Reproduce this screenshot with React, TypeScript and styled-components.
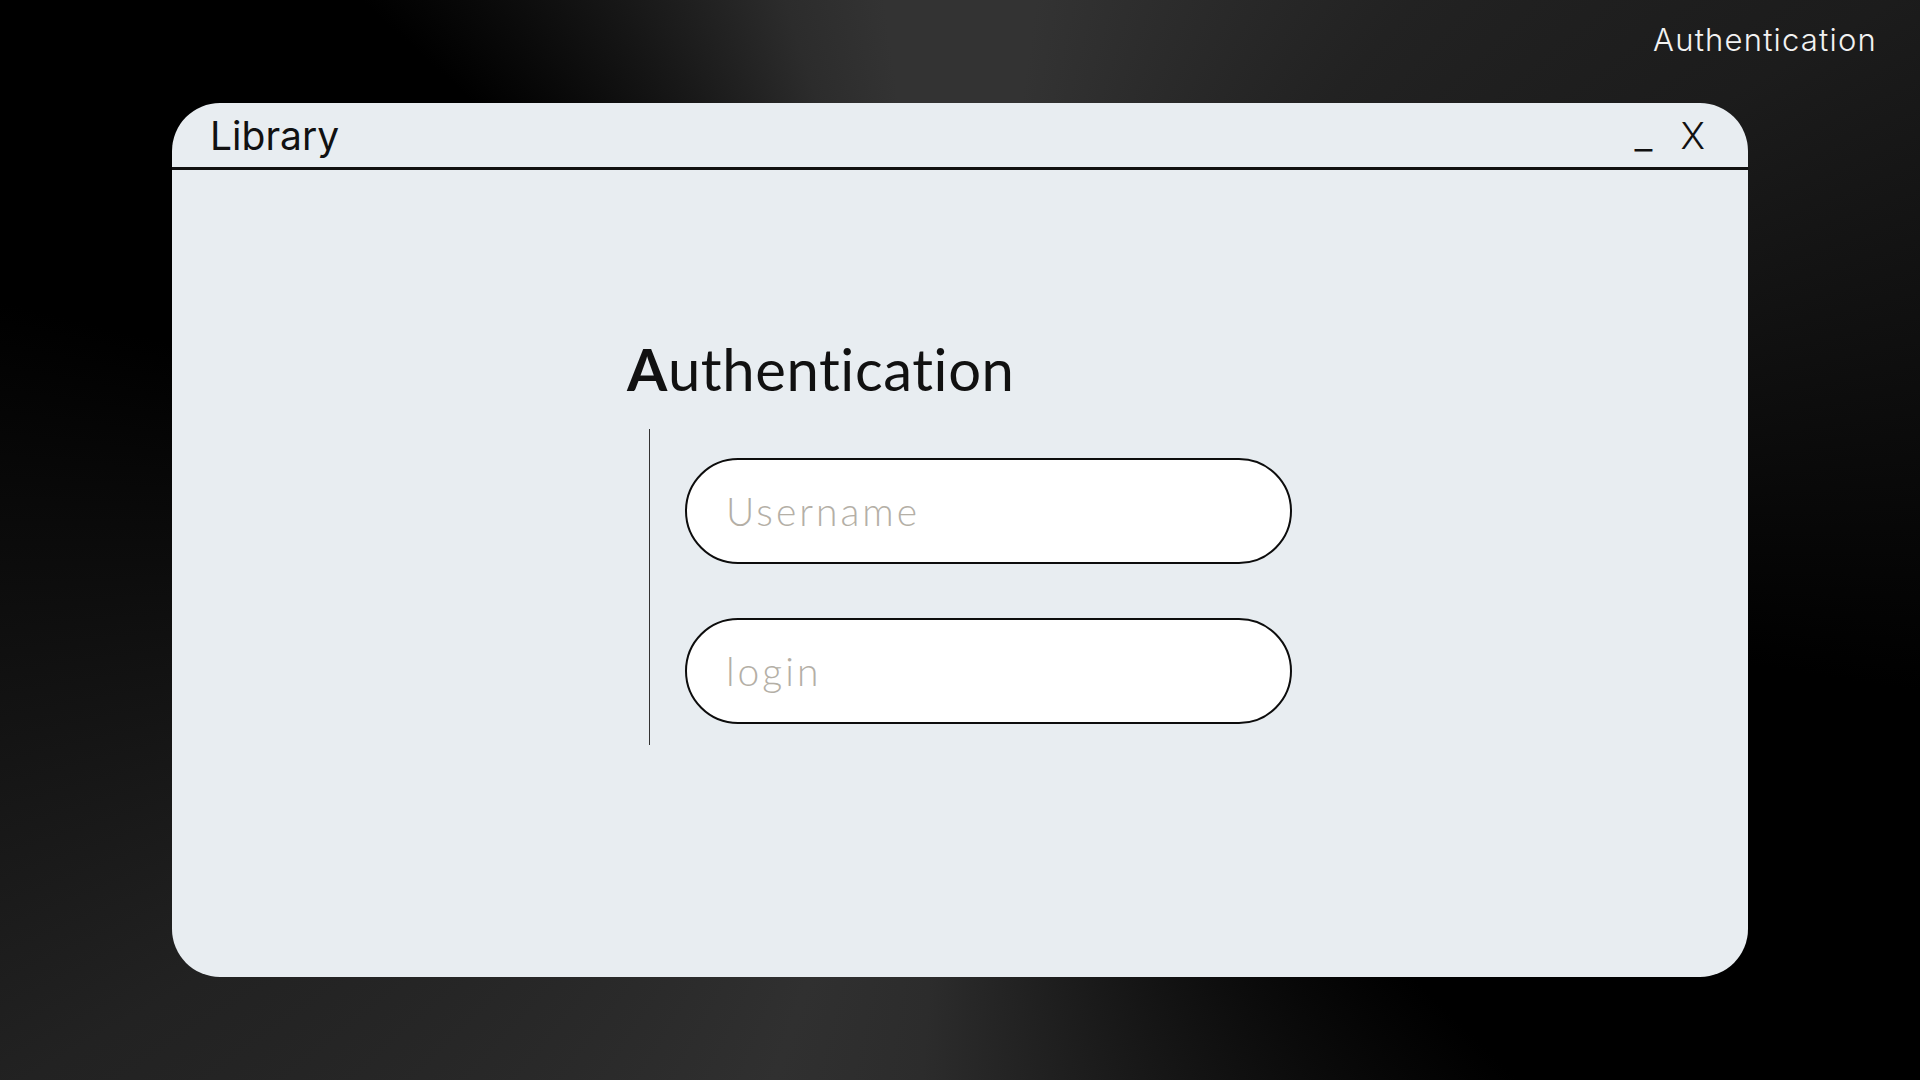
import React from 'react';
import styled, {createGlobalStyle} from 'styled-components';

const GlobalStyle = createGlobalStyle`
    html, body {
        margin: 0;
        padding: 0;
        width: 100%;
        height: 100%;
        background: #000;
    }
    * {
        box-sizing: border-box;
    }
`;

const UI_FONT = `"Inter", "Noto Sans", sans-serif`;
const FORM_FONT = `"Lato", "Open Sans", sans-serif`;

function App() {
    return (
        <>
            <GlobalStyle/>
            <S.page>
                <S.topBar>
                    <S.pageLabel>Authentication</S.pageLabel>
                </S.topBar>
                <S.window>
                    <S.titleBar>
                        <S.windowTitle>Library</S.windowTitle>
                        <S.controls>
                            <S.controlButton $small>_</S.controlButton>
                            <S.controlButton>X</S.controlButton>
                        </S.controls>
                    </S.titleBar>
                    <S.body>
                        <S.heading><S.initial>A</S.initial>uthentication</S.heading>
                        <S.fields>
                            <S.input placeholder="Username"/>
                            <S.input placeholder="login"/>
                        </S.fields>
                    </S.body>
                </S.window>
            </S.page>
        </>
    );
}

const S = {
    page: styled.div`
        width: 1920px;
        height: 1080px;
        display: flex;
        flex-direction: column;
        align-items: center;
        overflow: hidden;
        background: conic-gradient(from -48deg at 50% 50%,
            #000 0deg, #2c2c2c 30deg, #333 40deg, #333 56deg, #222 88deg, #1c1c1c 108deg,
            #000 147deg, #000 182deg, #2c2c2c 232deg, #303030 247deg, #2a2a2a 264deg,
            #222 288deg, #000 332deg, #000 360deg);
    `,
    topBar: styled.div`
        align-self: stretch;
        height: 103px;
        display: flex;
        justify-content: flex-end;
        padding: 20px 43px 0 0;
    `,
    pageLabel: styled.div`
        font-family: ${UI_FONT};
        font-weight: 300;
        font-size: 31px;
        line-height: 40px;
        letter-spacing: 1.2px;
        color: #f2f2f2;
    `,
    window: styled.div`
        width: 1576px;
        height: 874px;
        background: #e8edf1;
        border-radius: 48px;
        display: flex;
        flex-direction: column;
        overflow: hidden;
    `,
    titleBar: styled.div`
        height: 67px;
        flex-shrink: 0;
        display: flex;
        align-items: center;
        justify-content: space-between;
        padding: 0 43px 0 38px;
        border-bottom: 3px solid #111;
    `,
    windowTitle: styled.div`
        font-family: ${UI_FONT};
        font-weight: 400;
        font-size: 39px;
        color: #111;
    `,
    controls: styled.div`
        display: flex;
        align-items: baseline;
        gap: 28px;
    `,
    controlButton: styled.div<{$small?: boolean}>`
        font-family: ${UI_FONT};
        font-weight: 300;
        font-size: ${p => p.$small ? '40px' : '37px'};
        line-height: 1;
        color: #111;
        cursor: pointer;
        user-select: none;
    `,
    body: styled.div`
        flex: 1;
        display: flex;
        flex-direction: column;
        align-items: flex-start;
        padding: 170px 0 0 455px;
    `,
    heading: styled.h1`
        margin: 0;
        font-family: ${FORM_FONT};
        font-weight: 400;
        font-size: 58px;
        line-height: 58px;
        letter-spacing: 0.6px;
        font-variant-ligatures: none;
        color: #111;
    `,
    initial: styled.span`
        font-weight: 700;
    `,
    fields: styled.div`
        margin: 31px 0 0 22px;
        display: flex;
        flex-direction: column;
        gap: 54px;
        padding: 29px 0 21px 35px;
        border-left: 1px solid #333;
    `,
    input: styled.input`
        width: 607px;
        height: 106px;
        border: 2.5px solid #0d0d0d;
        border-radius: 53px;
        background: #fff;
        padding: 0 0 0 39px;
        outline: none;
        font-family: ${FORM_FONT};
        font-weight: 300;
        font-size: 39px;
        letter-spacing: 3px;
        font-variant-ligatures: none;
        color: #222;

        &::placeholder {
            color: #b4afa6;
        }
    `,
};

export default App;
